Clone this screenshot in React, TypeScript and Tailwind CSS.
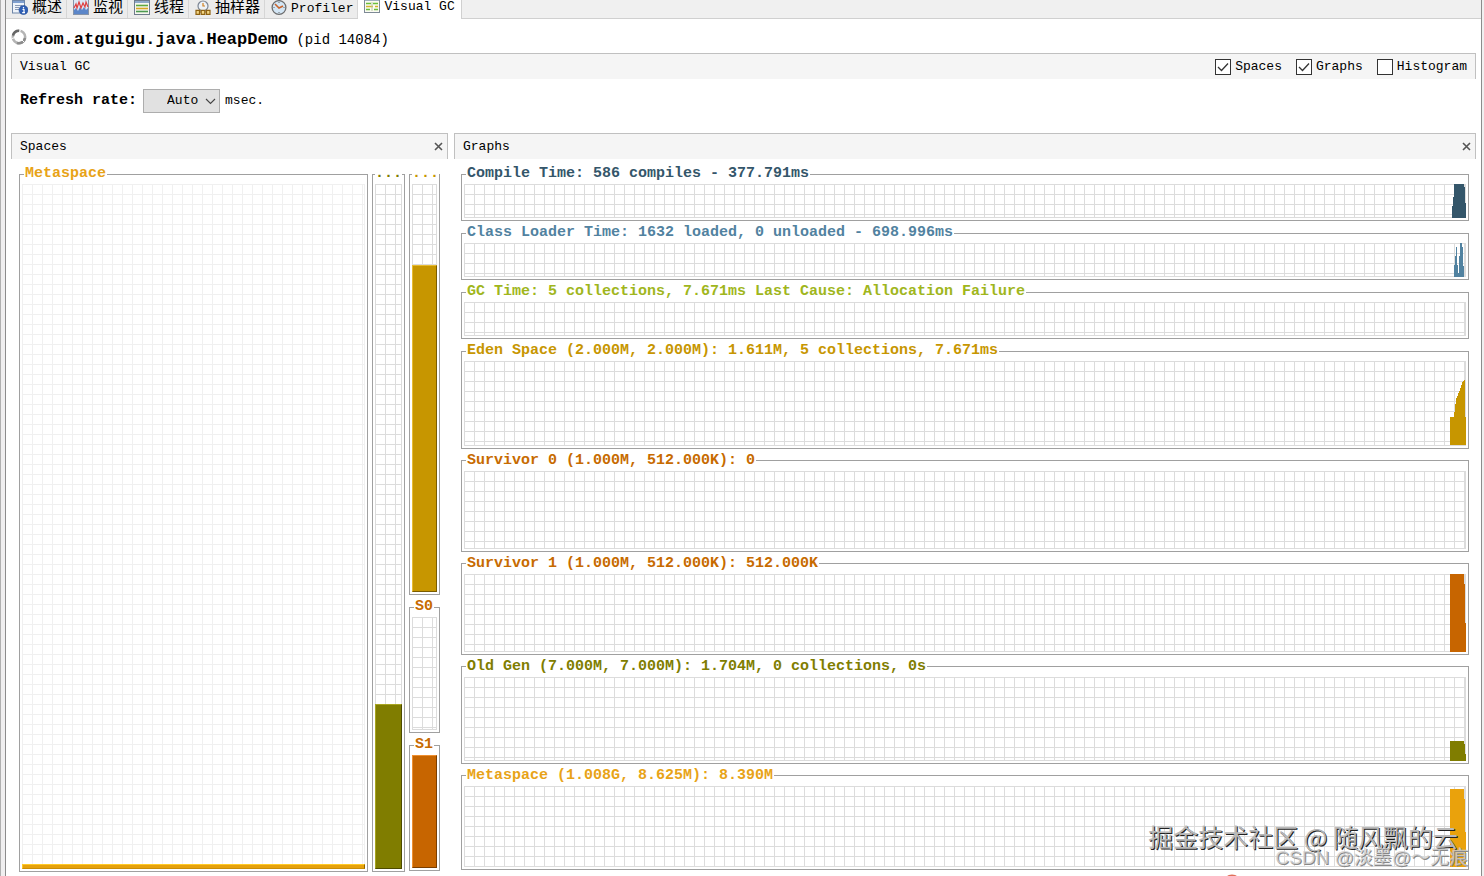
import { useState } from 'react';
import type { ReactNode } from 'react';

const GRID =
  'bg-[linear-gradient(to_right,#dcdcdc_1px,transparent_1px),linear-gradient(to_bottom,#dcdcdc_1px,transparent_1px)] bg-[size:10px_10px] border-r border-b border-[#dcdcdc]';
const FAINT_GRID =
  'bg-[linear-gradient(to_right,#f0f0f0_1px,transparent_1px),linear-gradient(to_bottom,#f0f0f0_1px,transparent_1px)] bg-[size:10px_10px] border-r border-b border-[#f0f0f0]';

interface Graph {
  title: string;
  text: string;
  fill: string;
  size: string;
  height: number;
  points?: string;
}

// points are drawn in a 16px wide strip at the right end of each graph
const graphs: Graph[] = [
  {
    title: 'Compile Time: 586 compiles - 377.791ms',
    text: 'text-[#34566a]',
    fill: 'fill-[#34566a]',
    size: 'basis-[56px]',
    height: 34,
    points: '2,34 2,22 3,22 3,13 4,13 4,0 14,0 14,3 15,3 15,19 16,19 16,34',
  },
  {
    title: 'Class Loader Time: 1632 loaded, 0 unloaded - 698.996ms',
    text: 'text-[#5182a0]',
    fill: 'fill-[#5182a0]',
    size: 'basis-[56px]',
    height: 34,
    points:
      '4,34 4,22 5,22 5,13 6,13 6,4 7,4 7,22 8,22 8,30 9,30 9,13 10,13 10,0 12,0 12,4 13,4 13,23 14,23 14,34',
  },
  {
    title: 'GC Time: 5 collections, 7.671ms Last Cause: Allocation Failure',
    text: 'text-[#a0b61c]',
    fill: 'fill-[#a0b61c]',
    size: 'basis-[56px]',
    height: 34,
  },
  {
    title: 'Eden Space (2.000M, 2.000M): 1.611M, 5 collections, 7.671ms',
    text: 'text-[#c79600]',
    fill: 'fill-[#c79600]',
    size: 'basis-[106px]',
    height: 84,
    points: '0,84 0,56 4,56 4,51 5,51 5,43 6,43 6,37 7,37 8,33 10,29 11,25 12,23 13,20 14,19 15,19 15,56 16,56 16,84',
  },
  {
    title: 'Survivor 0 (1.000M, 512.000K): 0',
    text: 'text-[#c76b00]',
    fill: 'fill-[#c76500]',
    size: 'basis-[100px]',
    height: 78,
  },
  {
    title: 'Survivor 1 (1.000M, 512.000K): 512.000K',
    text: 'text-[#c76b00]',
    fill: 'fill-[#c76500]',
    size: 'basis-[100px]',
    height: 78,
    points: '0,78 0,0 14,0 14,10 15,10 15,49 16,49 16,78',
  },
  {
    title: 'Old Gen (7.000M, 7.000M): 1.704M, 0 collections, 0s',
    text: 'text-[#807d00]',
    fill: 'fill-[#807d00]',
    size: 'basis-[106px]',
    height: 84,
    points: '0,84 0,64 14,64 14,67 15,67 15,77 16,77 16,84',
  },
  {
    title: 'Metaspace (1.008G, 8.625M): 8.390M',
    text: 'text-[#e8a317]',
    fill: 'fill-[#eaa20c]',
    size: 'basis-[103px]',
    height: 81,
    points: '0,81 0,3 14,3 14,13 15,13 15,46 16,46 16,81',
  },
];

function Frame({ title, text, className, children }: { title: string; text: string; className: string; children: ReactNode }) {
  return (
    <fieldset className={`flex flex-col min-w-0 border border-[#a0a0a0] px-[2px] pt-px pb-[2px] ${className}`}>
      <legend
        className={`h-[18px] max-w-none text-[15px] leading-[18px] font-bold whitespace-pre ${title === '...' ? '' : 'ml-[2px] px-px'} ${text}`}
      >
        {title}
      </legend>
      {children}
    </fieldset>
  );
}

function GraphFrame({ graph }: { graph: Graph }) {
  return (
    <Frame title={graph.title} text={graph.text} className={`grow shrink-0 ${graph.size}`}>
      <div className={`relative grow ${GRID}`}>
        {graph.points && (
          <svg
            className={`absolute -right-px top-0 w-4 h-[calc(100%+1px)] ${graph.fill}`}
            viewBox={`0 0 16 ${graph.height}`}
            preserveAspectRatio="none"
            shapeRendering="crispEdges"
          >
            <polygon points={graph.points} />
          </svg>
        )}
      </div>
    </Frame>
  );
}

function Space({ title, text, used, bar, faint, className = '', size = 'grow' }: {
  title: string;
  text: string;
  used: number;
  bar: string;
  faint?: boolean;
  className?: string;
  size?: string;
}) {
  return (
    <Frame title={title} text={text} className={className}>
      <div className={`flex flex-col justify-end ${size} ${faint ? FAINT_GRID : GRID}`}>
        {used > 0 && (
          <div className={`-mr-px -mb-px shrink-0 border ${bar}`} style={{ height: `calc(${used}% + 1px)` }} />
        )}
      </div>
    </Frame>
  );
}

function PanelHeader({ title, onClose }: { title: string; onClose: () => void }) {
  return (
    <div className="flex items-center justify-between h-[26px] pl-2 pr-1 bg-[#f5f5f5] border border-b-0 border-[#c0c0c0]">
      <h2>{title}</h2>
      <button aria-label={`Close ${title}`} onClick={onClose}>
        <svg width="9" height="9" viewBox="0 0 9 9" stroke="#555" strokeWidth="1.6">
          <path d="M1 1l7 7M8 1L1 8" />
        </svg>
      </button>
    </div>
  );
}

function OverviewIcon() {
  return (
    <svg width="16" height="16" viewBox="0 0 16 16">
      <rect x="0.5" y="0.5" width="12" height="12.5" fill="#eef3fa" stroke="#6f86a8" />
      <rect x="1" y="1" width="11" height="2" fill="#7f9fcf" />
      <path d="M3 5.5h7M3 7.5h4M3 9.5h4" stroke="#8a9ab5" />
      <circle cx="11.5" cy="10" r="4.5" fill="#2f5fb5" stroke="#244a90" strokeWidth="0.6" />
      <path d="M11.5 7v1.5M10.5 9.5h1.5v3M10.2 12.6h2.8" stroke="#fff" strokeWidth="1.2" fill="none" />
    </svg>
  );
}

function MonitorIcon() {
  return (
    <svg width="16" height="16" viewBox="0 0 16 16">
      <rect x="0.5" y="-0.5" width="15" height="15" fill="#dbe8f6" stroke="#8593a8" />
      <path d="M1 14V10l2-2 2 3 2-4 2 3 2-3 2 3 2-2v6z" fill="#5b86c9" />
      <path d="M1 8l2-4 1 4 2-6 2 6 2-5 2 4 1-5 2 5" stroke="#e04040" strokeWidth="1.2" fill="none" />
    </svg>
  );
}

function ThreadsIcon() {
  return (
    <svg width="16" height="16" viewBox="0 0 16 16">
      <rect x="0.5" y="0.5" width="15" height="14" fill="#f7f7ef" stroke="#6f7b8c" />
      <rect x="1" y="1" width="14" height="2" fill="#8fa9c9" />
      <path d="M2 5.5h12" stroke="#5fa83c" strokeWidth="1.6" />
      <path d="M2 8.5h12" stroke="#d9a520" strokeWidth="1.6" />
      <path d="M2 11.5h12" stroke="#4d9a50" strokeWidth="1.6" />
    </svg>
  );
}

function SamplerIcon() {
  return (
    <svg width="16" height="16" viewBox="0 0 16 16" fill="none">
      <circle cx="8" cy="6" r="5" fill="#edf2f8" stroke="#7d8694" strokeWidth="1.2" />
      <path d="M8 3v3h2" stroke="#d08020" strokeWidth="1.2" />
      <path d="M1 14.3v-4h3.5v4zM6.2 14.3v-4h3.6v4zM11.5 14.3v-4H15v4zM4.5 12h1.7M9.8 12h1.7" fill="#f3d583" stroke="#8f6210" strokeWidth="1.2" />
    </svg>
  );
}

function ClockIcon() {
  return (
    <svg width="16" height="16" viewBox="0 0 16 16" fill="none">
      <circle cx="8" cy="7.5" r="6.9" fill="#d3e6f5" stroke="#6c6c6c" strokeWidth="1.3" />
      <path d="M8 2v1M8 12v1M2.5 7.5h1M12.5 7.5h1" stroke="#666" />
      <path d="M4 4l4 4 4-2" stroke="#c8642c" strokeWidth="1.6" />
    </svg>
  );
}

function VisualGcIcon() {
  return (
    <svg className="-mt-[2px]" width="16" height="15" viewBox="0 0 16 15">
      <rect x="0.5" y="0.5" width="15" height="14" fill="#fbfbf2" stroke="#7e8a96" />
      <rect x="1" y="1" width="14" height="2" fill="#a0b0c0" />
      <path d="M2 5.5h5M9 5.5h5M2 11.5h4M10 11.5h4" stroke="#6abf3a" strokeWidth="1.5" />
      <path d="M2 8.5h7M11 8.5h3" stroke="#d2b52c" strokeWidth="1.5" />
      <path d="M8 4v9" stroke="#b9c7a6" />
    </svg>
  );
}

const tabs = [
  { name: '概述', icon: <OverviewIcon />, size: 'text-[15px]' },
  { name: '监视', icon: <MonitorIcon />, size: 'text-[15px]' },
  { name: '线程', icon: <ThreadsIcon />, size: 'text-[15px]' },
  { name: '抽样器', icon: <SamplerIcon />, size: 'text-[15px]' },
  { name: 'Profiler', icon: <ClockIcon />, size: 'text-[13px]' },
];

export default function App() {
  const [spaces, setSpaces] = useState(true);
  const [graphsOn, setGraphsOn] = useState(true);
  const [histogram, setHistogram] = useState(false);

  const toggles = [
    { label: 'Spaces', value: spaces, set: setSpaces },
    { label: 'Graphs', value: graphsOn, set: setGraphsOn },
    { label: 'Histogram', value: histogram, set: setHistogram },
  ];

  return (
    <div className="relative flex min-h-screen overflow-hidden bg-white text-black text-[13px] leading-4 font-['Liberation_Mono','Noto_Sans_CJK_SC',monospace]">
      <div className="w-[6px] shrink-0 bg-[#f0eff0] border-l border-r border-l-[#b0b0b0] border-r-[#8c8c8c]" />

      <div className="flex flex-col grow min-w-0">
        <nav className="flex h-[19px] shrink-0 bg-[#f0f0f0] border-b border-[#d0d0d0]">
          {tabs.map(tab => (
            <button key={tab.name} className="flex items-start gap-1 h-[18px] pl-[6px] pr-1 bg-[#ececec] border-r border-[#d6d6d6]">
              {tab.icon}
              <span className={`mt-px ${tab.size}`}>{tab.name}</span>
            </button>
          ))}
          <button className="flex items-start gap-1 h-[19px] pl-[6px] pr-[6px] bg-white border-r border-[#d0d0d0]">
            <VisualGcIcon />
            <span className="leading-[14px]">Visual GC</span>
          </button>
        </nav>

        <div className="flex flex-col grow px-[5px]">
          <header className="flex items-center h-[34px] pt-2 gap-[6px]">
            <svg className="-mt-[6px]" width="16" height="16" viewBox="0 0 16 16" fill="none" strokeWidth="2.6">
              <circle cx="8" cy="8" r="6.2" stroke="#b4b4b4" />
              <path d="M14 9A6.2 6.2 0 0 1 6 13.9" stroke="#8c8c8c" />
              <path d="M2 6.5A6.2 6.2 0 0 1 8 1.8" stroke="#666" />
              <path d="M9.5 0.5l-1 3M1 9.5l3-1M13 13l-2-2" stroke="#fff" strokeWidth="1" />
            </svg>
            <h1 className="text-[14px] leading-5 whitespace-pre">
              <b className="text-[17px]">com.atguigu.java.HeapDemo</b> (pid 14084)
            </h1>
          </header>

          <div className="flex items-center justify-between h-[26px] px-2 bg-[#f5f5f5] border border-b-0 border-[#c0c0c0]">
            <span>Visual GC</span>
            <div className="flex gap-[14px]">
              {toggles.map(t => (
                <label key={t.label} className="flex items-center gap-1">
                  <span className="relative flex">
                    <input
                      type="checkbox"
                      checked={t.value}
                      onChange={e => t.set(e.target.checked)}
                      className="appearance-none size-4 bg-white border border-[#333]"
                    />
                    {t.value && (
                      <svg className="absolute inset-0 pointer-events-none" width="16" height="16" viewBox="0 0 16 16" fill="none">
                        <path d="M3 8l3.5 3.5L13 4.5" stroke="#333" strokeWidth="1.3" />
                      </svg>
                    )}
                  </span>
                  {t.label}
                </label>
              ))}
            </div>
          </div>

          <div className="flex items-center h-[54px] pl-[9px] pb-[10px]">
            <label htmlFor="rate" className="text-[15px] font-bold">Refresh rate:</label>
            <div className="relative ml-[6px] mr-[5px]">
              <select id="rate" className="appearance-none block w-[77px] h-6 pl-[23px] bg-[#e1e1e1] border border-[#adadad]">
                <option>Auto</option>
              </select>
              <svg className="absolute right-1 top-2 pointer-events-none" width="11" height="8" viewBox="0 0 11 8" fill="none">
                <path d="M1 2l4.5 4.5L10 2" stroke="#444" strokeWidth="1.1" />
              </svg>
            </div>
            msec.
          </div>

          <main className="flex grow gap-[6px]">
            {spaces && (
              <section className="flex flex-col w-[437px] shrink-0">
                <PanelHeader title="Spaces" onClose={() => setSpaces(false)} />
                <div className="flex grow gap-1 pt-[6px] pb-1 px-2">
                  <Space title="Metaspace" text="text-[#e8a317]" used={0.6} bar="bg-[#e6a20c] border-t-[#ffc926] border-l-[#ffc926] border-r-[#8f6400] border-b-[#c98d08]" faint className="grow" />
                  <Space title="..." text="text-[#807d00]" used={24} bar="bg-[#807d00] border-t-[#a8a520] border-l-[#a8a520] border-r-[#4d4b00] border-b-[#4d4b00]" className="w-[33px]" />
                  <div className="flex flex-col gap-[3px] w-[31px] pb-px">
                    <Space title="..." text="text-[#c79600]" used={80} bar="bg-[#c79600] border-t-[#e8bb30] border-l-[#e8bb30] border-r-[#7a5c00] border-b-[#7a5c00]" className="grow" />
                    <Space title="S0" text="text-[#c76b00]" used={0} bar="" size="h-[113px]" />
                    <Space title="S1" text="text-[#c76b00]" used={100} bar="bg-[#c76500] border-t-[#ee8f30] border-l-[#ee8f30] border-r-[#7a3e00] border-b-[#7a3e00]" size="h-[113px]" />
                  </div>
                </div>
              </section>
            )}

            {graphsOn && (
              <section className="flex flex-col grow min-w-0">
                <PanelHeader title="Graphs" onClose={() => setGraphsOn(false)} />
                <div className="flex flex-col grow gap-[3px] py-[6px] px-[7px]">
                  {graphs.map(g => <GraphFrame key={g.title} graph={g} />)}
                </div>
              </section>
            )}
          </main>
        </div>
      </div>

      <div className="w-[3px] shrink-0 bg-[#f0f0f0] border-l border-[#8c8c8c]" />

      <div className="absolute right-[26px] bottom-[22px] text-[25px] leading-9 whitespace-pre text-[#b8b8b8] font-['Noto_Sans_CJK_SC',sans-serif] [text-shadow:1px_1px_0_#222]">
        掘金技术社区 @ 随风飘的云
      </div>
      <div className="absolute right-4 bottom-[6px] text-[19px] leading-6 whitespace-pre text-[#d0d0d0]/80 font-['Liberation_Sans','Noto_Sans_CJK_SC',sans-serif] [text-shadow:1px_1px_0_#888]">
        CSDN @淡墨@～无痕
      </div>
      <svg className="absolute right-[247px] bottom-0" width="10" height="2" viewBox="0 0 10 2">
        <ellipse cx="5" cy="3" rx="5" ry="2.6" fill="#e0705a" />
      </svg>
    </div>
  );
}
